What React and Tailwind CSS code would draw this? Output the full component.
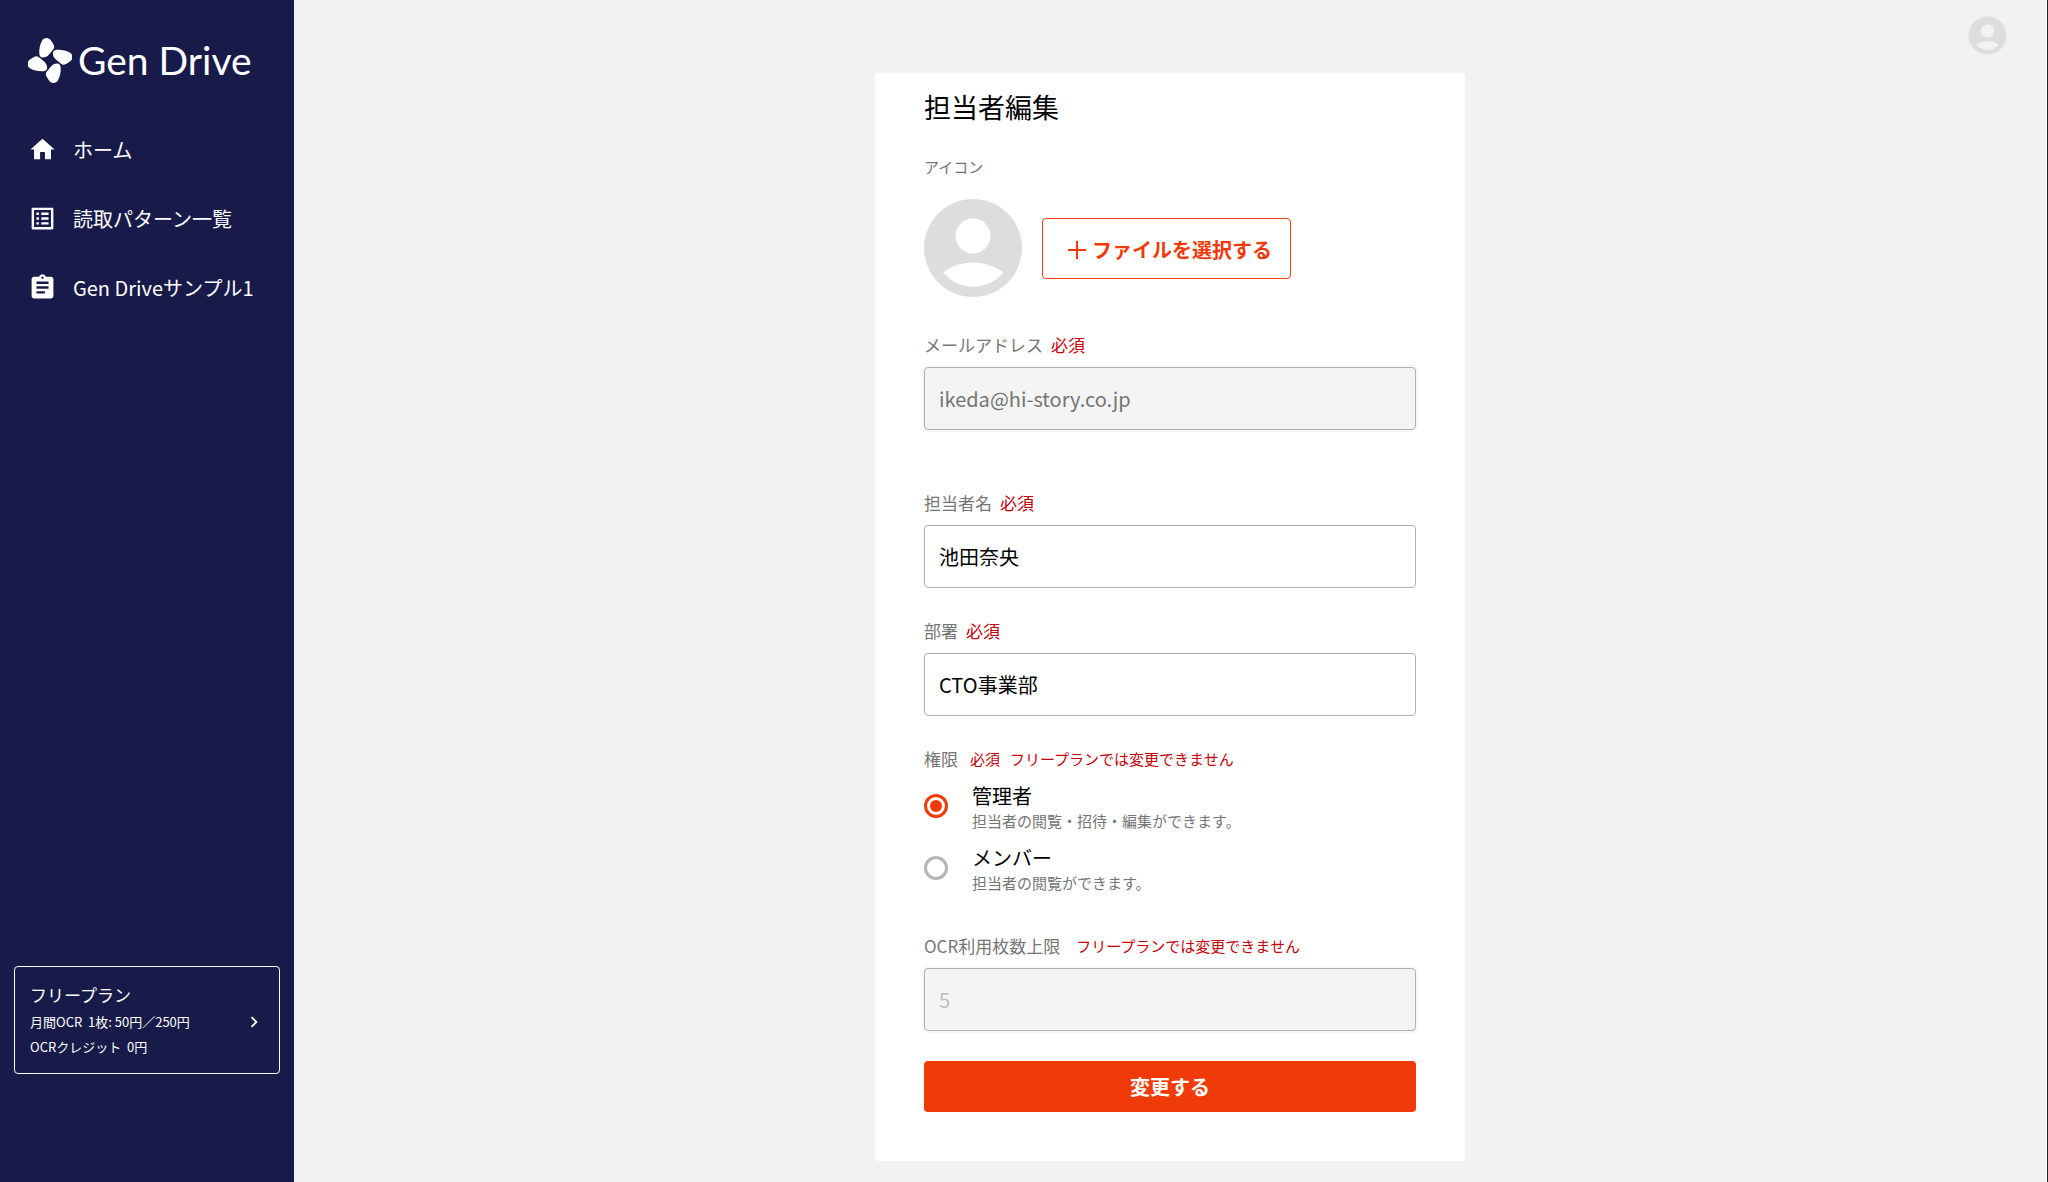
import { MdAssignment, MdChevronRight, MdHome, MdOutlineListAlt } from "react-icons/md";

const menuItems = [
  { id: 1, label: "ホーム", icon: MdHome },
  { id: 2, label: "読取パターン一覧", icon: MdOutlineListAlt },
  { id: 3, label: "Gen Driveサンプル1", icon: MdAssignment },
];

const roles = [
  {
    value: "admin",
    label: "管理者",
    description: "担当者の閲覧・招待・編集ができます。",
  },
  {
    value: "member",
    label: "メンバー",
    description: "担当者の閲覧ができます。",
  },
];

function LogoMark() {
  const petal =
    "M18.5 0 C20.5 0 22 1 23.5 3.2 L25.5 6.5 C26.6 8.5 26.4 9.800 25.200 11.500 L21 16.600 C19.500 18.400 17.500 19.500 15 19.600 C12.500 19.700 11.500 18 11.300 15.500 C11 11 12 6.500 14 2.800 C15 1 16.500 0 18.500 0 Z";
  return (
    <svg viewBox="0 0 44 45" className="h-[45px] w-11 shrink-0" fill="currentColor" aria-hidden="true">
      <path d={petal} />
      <path d={petal} transform="rotate(90 22 22.500)" />
      <path d={petal} transform="rotate(180 22 22.500)" />
      <path d={petal} transform="rotate(270 22 22.500)" />
    </svg>
  );
}

function Avatar({ className }) {
  return (
    <svg viewBox="0 0 98 98" className={className} aria-hidden="true">
      <circle cx="49" cy="49" r="49" fill="#dddddd" />
      <circle cx="49" cy="37" r="17.500" fill="currentColor" />
      <path d="M19 73.500 C36 60 62 60 79.500 73.500 C63 92.500 35 92.500 19 73.500 Z" fill="currentColor" />
    </svg>
  );
}

function Sidebar() {
  return (
    <aside className="flex w-[294px] shrink-0 flex-col bg-[#181b4a] text-white">
      <a href="#" className="flex items-center gap-1.5 px-7 pt-[38px]">
        <LogoMark />
        <span className="font-[Lato,sans-serif] text-[39px] leading-[45px] whitespace-nowrap">Gen Drive</span>
      </a>

      <nav className="mt-8 flex flex-col">
        {menuItems.map((item) => (
          <a key={item.id} href="#" className="flex h-[69px] items-center gap-4 pl-7 text-xl">
            <item.icon size={29} />
            {item.label}
          </a>
        ))}
      </nav>

      {/* プラン */}
      <a
        href="#"
        className="mx-3.5 mt-auto mb-[108px] flex items-center justify-between rounded border border-white py-3.5 pr-3.5 pl-[15px]"
      >
        <span className="flex flex-col text-[13px] leading-[25px]">
          <span className="text-[17px] leading-7">フリープラン</span>
          <span>月間OCR&nbsp; 1枚: 50円／250円</span>
          <span>OCRクレジット&nbsp; 0円</span>
        </span>
        <MdChevronRight size={22} className="mt-1" />
      </a>
    </aside>
  );
}

function Field({ id, label, required, note, className, inputColor = "text-black", ...props }) {
  return (
    <div className={className}>
      <div className="flex h-6 items-center text-[17px]">
        <label htmlFor={id} className="text-[#757575]">
          {label}
        </label>
        {required && <span className="ml-2 text-[#c7000d]">必須</span>}
        {note && <span className="ml-4 text-[15px] text-[#c7000d]">{note}</span>}
      </div>
      <input
        id={id}
        className={`mt-2.5 h-[63px] w-full rounded border border-[#b0b0b0] px-3.5 text-xl disabled:bg-[#f4f4f4] disabled:shadow-[0_0_0_2px_#f7f7f7] ${inputColor}`}
        {...props}
      />
    </div>
  );
}

export default function App() {
  return (
    <div className="flex min-h-screen border-r border-[#222222] bg-[#f2f2f2] font-['Noto_Sans_CJK_JP',sans-serif]">
      <Sidebar />

      <main className="relative flex-1 border-r border-white pt-[73px] pb-[21px]">
        <button
          type="button"
          aria-label="アカウント"
          className="absolute top-4 right-[39px] rounded-full border border-[#dfe6ee]"
        >
          <Avatar className="size-[37px] text-[#f2f2f2]" />
        </button>

        <form className="mx-auto max-w-[590px] rounded bg-white px-[49px] pt-4 pb-[49px]">
          <h1 className="text-[27px] leading-9">担当者編集</h1>

          {/* アイコン */}
          <p className="mt-[30px] text-[15px] leading-6 text-[#757575]">アイコン</p>
          <div className="mt-5 flex items-center gap-5">
            <Avatar className="size-[98px] text-white" />
            <button
              type="button"
              className="flex h-[61px] items-center gap-1.5 rounded border border-[#f13a0a] pt-1 pr-[18px] pl-[25px] text-xl font-bold text-[#f13a0a]"
            >
              <svg viewBox="0 0 18 18" className="size-[18px]" stroke="currentColor" strokeWidth="2" aria-hidden="true">
                <path d="M9 0v18M0 9h18" />
              </svg>
              ファイルを選択する
            </button>
          </div>

          <Field
            id="email"
            type="email"
            label="メールアドレス"
            required
            className="mt-9"
            inputColor="text-[#757575]"
            defaultValue="ikeda@hi-story.co.jp"
            disabled
          />
          <Field id="name" type="text" label="担当者名" required className="mt-[61px]" defaultValue="池田奈央" />
          <Field id="department" type="text" label="部署" required className="mt-[31px]" defaultValue="CTO事業部" />

          {/* 権限 */}
          <fieldset className="mt-[31px]">
            <legend className="flex h-6 items-center text-[17px] text-[#757575]">
              権限
              <span className="ml-3 text-[15px] text-[#c7000d]">必須</span>
              <span className="ml-2.5 text-[15px] text-[#c7000d]">フリープランでは変更できません</span>
            </legend>
            <div className="mt-3 flex flex-col gap-3">
              {roles.map((role) => (
                <label key={role.value} className="flex items-center gap-6">
                  <input
                    type="radio"
                    name="role"
                    value={role.value}
                    defaultChecked={role.value === "admin"}
                    className="mb-1 size-6 appearance-none rounded-full border-[3px] border-[#b5b5b5] bg-white bg-clip-content p-[3px] checked:border-[#f13a0a] checked:bg-[#f13a0a]"
                  />
                  <span className="flex flex-col">
                    <span className="text-xl leading-[26px]">{role.label}</span>
                    <span className="text-[15px] leading-6 text-[#757575]">{role.description}</span>
                  </span>
                </label>
              ))}
            </div>
          </fieldset>

          <Field
            id="limit"
            type="text"
            label="OCR利用枚数上限"
            note="フリープランでは変更できません"
            className="mt-[39px]"
            inputColor="text-[#bdbdbd]"
            defaultValue="5"
            disabled
          />

          <button type="submit" className="mt-[30px] h-[51px] w-full rounded bg-[#f13a0a] text-xl font-bold text-white">
            変更する
          </button>
        </form>
      </main>
    </div>
  );
}
